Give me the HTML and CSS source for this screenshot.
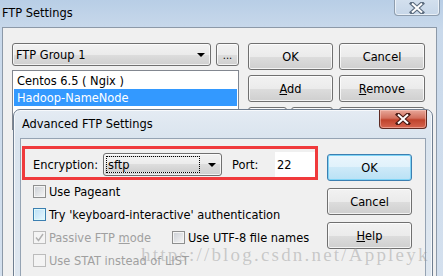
FILE: index.html
```html
<!DOCTYPE html>
<html>
<head>
<meta charset="utf-8">
<link rel="stylesheet" href="styles.css">
</head>
<body>
<div class="screen">
  <div class="outer">
    <div class="titlebar">
      <span class="title">FTP Settings</span>
      <div class="close close-inactive">
        <svg width="18" height="12" viewBox="0 0 18 12"><path d="M4 1.5 L14 10.5 M14 1.5 L4 10.5" stroke="#5b6b7e" stroke-width="4.2" stroke-linecap="square"/><path d="M4 1.5 L14 10.5 M14 1.5 L4 10.5" stroke="#fff" stroke-width="2"/></svg>
      </div>
    </div>
    <div class="client">
      <div class="left">
        <div class="toprow">
          <div class="combo combo-group"><span>FTP Group 1</span><i class="arrow"></i></div>
          <div class="btn dots">...</div>
        </div>
        <div class="listbox">
          <div class="item">Centos 6.5 ( Ngix )</div>
          <div class="item sel">Hadoop-NameNode</div>
        </div>
      </div>
      <div class="btngrid">
        <div class="btn">OK</div>
        <div class="btn">Cancel</div>
        <div class="btn"><span><u>A</u>dd</span></div>
        <div class="btn"><span><u>R</u>emove</span></div>
        <div class="pair"><div class="btn small1">Up</div><div class="btn small2">Down</div></div>
        <div class="btn">Edit</div>
      </div>
    </div>
  </div>

  <div class="dialog">
    <div class="dtitle">
      <span class="title">Advanced FTP Settings</span>
      <div class="close close-red">
        <svg width="18" height="12" viewBox="0 0 18 12"><path d="M4 1.5 L14 10.5 M14 1.5 L4 10.5" stroke="#4a1a14" stroke-width="4.2" stroke-linecap="square"/><path d="M4 1.5 L14 10.5 M14 1.5 L4 10.5" stroke="#fff" stroke-width="2"/></svg>
      </div>
    </div>
    <div class="dclient">
      <div class="dleft">
        <div class="redbox">
          <span class="lbl enc">Encryption:</span>
          <div class="combo combo-enc"><span class="focus">sftp</span><i class="arrow"></i></div>
          <span class="lbl port">Port:</span>
          <div class="input">22</div>
        </div>
        <div class="row"><span class="cb"></span><span>Use Pageant</span></div>
        <div class="row"><span class="cb hot"></span><span>Try 'keyboard-interactive' authentication</span></div>
        <div class="row">
          <span class="cb dis"><svg width="11" height="11" viewBox="0 0 11 11"><path d="M2 5.5 L4.5 8.5 L9 2" fill="none" stroke="#b0b0b0" stroke-width="1.4"/></svg></span>
          <span class="distext pass">Passive FTP <u>m</u>ode</span>
          <span class="cb"></span><span>Use UTF-8 file names</span>
        </div>
        <div class="row"><span class="cb dis"></span><span class="distext">Use STAT instead of LIST</span></div>
      </div>
      <div class="dright">
        <div class="btn default">OK</div>
        <div class="btn">Cancel</div>
        <div class="btn"><span><u>H</u>elp</span></div>
      </div>
    </div>
  </div>

  <div class="watermark">https://blog.csdn.net/Appleyk</div>
</div>
</body>
</html>
```
FILE: styles.css
```css
* { box-sizing: border-box; }
html, body { margin: 0; padding: 0; }
body {
  width: 443px;
  height: 276px;
  overflow: hidden;
  font-family: "DejaVu Sans Condensed", "DejaVu Sans", sans-serif;
  font-stretch: condensed;
  font-size: 12.7px;
  color: #000;
}
.screen {
  position: relative;
  width: 443px;
  height: 276px;
  overflow: hidden;
}
.outer {
  height: 276px;
  background: linear-gradient(#b8cee6, #c9d9eb 30px, #d4e0ee);
  padding: 0 6px 0 2px;
  display: flex;
  flex-direction: column;
}
.titlebar {
  height: 27px;
  flex: none;
  position: relative;
  display: flex;
  align-items: center;
  padding-bottom: 2px;
}
.close {
  position: absolute;
  display: flex;
  align-items: center;
  justify-content: center;
  border-radius: 0 0 4px 4px;
}
.close-inactive {
  left: 392px;
  top: -4px;
  width: 46px;
  height: 20px;
  padding-top: 4px;
  border: 1px solid #8e9dae;
  border-top: none;
  background: linear-gradient(#d6e2ef, #c6d6e8);
  box-shadow: inset 0 0 0 1px rgba(255,255,255,0.6);
}
.client {
  flex: 1;
  background: #f0f0f0;
  border: 1px solid #8c99a8;
  border-bottom: none;
  padding: 15px 0 0 9px;
  display: flex;
  align-items: flex-start;
}
.left { width: 227px; }
.toprow { display: flex; gap: 5px; height: 23px; }
.combo {
  position: relative;
  height: 23px;
  border: 1px solid #707070;
  border-radius: 3px;
  background: linear-gradient(#f2f2f2, #ebebeb 50%, #dddddd 50%, #cfcfcf);
  box-shadow: inset 0 0 0 1px rgba(255,255,255,0.7);
  display: flex;
  align-items: center;
  padding-left: 3px;
}
.combo-group { width: 199px; }
.arrow {
  position: absolute;
  right: 5px;
  top: 9px;
  width: 0;
  height: 0;
  border-left: 4px solid transparent;
  border-right: 4px solid transparent;
  border-top: 4px solid #000;
}
.btn {
  height: 27px;
  border: 1px solid #707070;
  border-radius: 3px;
  background: linear-gradient(#f2f2f2, #ebebeb 50%, #dddddd 50%, #cfcfcf);
  box-shadow: inset 0 0 0 1px rgba(255,255,255,0.75);
  display: flex;
  align-items: center;
  justify-content: center;
}
.dots { width: 23px; height: 23px; padding-top: 2px; font-size: 11px; }
.listbox {
  margin-top: 4px;
  height: 60px;
  background: #fff;
  border: 1px solid #828790;
  padding: 1px;
}
.item { height: 17px; line-height: 17px; padding-left: 3px; }
.sel { background: #3399ff; color: #fff; }
.btngrid {
  margin-left: 9px;
  display: grid;
  grid-template-columns: 85px 86px;
  column-gap: 6px;
  row-gap: 5px;
}
.pair { display: flex; gap: 4px; }
.small1 { width: 39px; }
.small2 { width: 42px; }

.dialog {
  position: absolute;
  left: 13px;
  top: 109px;
  width: 420px;
  height: 200px;
  border: 1px solid #6f7e90;
  border-radius: 7px 7px 0 0;
  background: linear-gradient(#e4ebf3, #dae4ee 28px, #dfe7f0);
  box-shadow: inset 0 0 0 1px rgba(255,255,255,0.7);
  padding: 0 6px 0 6px;
  display: flex;
  flex-direction: column;
}
.dtitle {
  height: 28px;
  flex: none;
  position: relative;
  display: flex;
  align-items: center;
  padding-left: 2px;
  padding-bottom: 1px;
}
.close-red {
  left: 359px;
  top: 0;
  width: 48px;
  height: 19px;
  border: 1px solid #5e2a22;
  border-top: none;
  background: linear-gradient(#e8a89a, #d2705e 45%, #c0432c 55%, #d66650);
  box-shadow: inset 0 0 0 1px rgba(255,210,200,0.5);
}
.dclient {
  flex: 1;
  background: #f0f0f0;
  border: 1px solid #95a3b3;
  display: flex;
  align-items: flex-start;
}
.dleft { margin-left: 1px; margin-top: 7px; width: 296px; }
.redbox {
  height: 34px;
  border: 3px solid #f03a3c;
  display: flex;
  align-items: center;
  padding: 3px 0 0 8px;
}
.lbl.enc { width: 70px; }
.combo-enc { width: 119px; padding: 2px; }
.combo-enc .focus {
  display: block;
  width: 94px;
  height: 17px;
  line-height: 16px;
  border: 1px dotted #000;
  padding-left: 1px;
  background: linear-gradient(#f2f2f2, #ebebeb 50%, #dddddd 50%, #cfcfcf);
}
.lbl.port { margin-left: 10px; width: 43px; }
.input {
  width: 40px;
  height: 25px;
  background: #fff;
  display: flex;
  align-items: center;
  padding-left: 2px;
}
.row {
  height: 23px;
  display: flex;
  align-items: center;
  padding-left: 11px;
}
.cb {
  width: 13px;
  height: 13px;
  border: 1px solid #8e8f8f;
  background: linear-gradient(135deg, #cbcfd5, #f6f6f6);
  box-shadow: inset 0 0 0 1px #f4f4f4;
  margin-right: 3px;
  flex: none;
  display: flex;
  align-items: center;
  justify-content: center;
}
.cb.hot {
  border-color: #3c7fb1;
  background: linear-gradient(135deg, #b9dff6, #e9f7fe);
  box-shadow: inset 0 0 0 1px #def9fa;
}
.cb.dis {
  border-color: #bcbcbc;
  background: #f4f4f4;
  box-shadow: none;
}
.distext { color: #a0a0a0; }
.pass { width: 123px; }
.dright {
  margin-left: 9px;
  margin-top: 15px;
  display: flex;
  flex-direction: column;
  gap: 7px;
  width: 85px;
}
.btn.default {
  border-color: #3c7fb1;
  box-shadow: inset 0 0 0 1px #7fd4f6;
  background: linear-gradient(#eaf6fd, #e0f1fb 50%, #cde9f8 50%, #b9e1f5);
}
.watermark {
  position: absolute;
  left: 141px;
  top: 246px;
  font-family: "Liberation Serif", serif;
  font-size: 19px;
  line-height: 17px;
  letter-spacing: 2.2px;
  color: rgba(150,150,150,0.45);
  white-space: nowrap;
}
```
